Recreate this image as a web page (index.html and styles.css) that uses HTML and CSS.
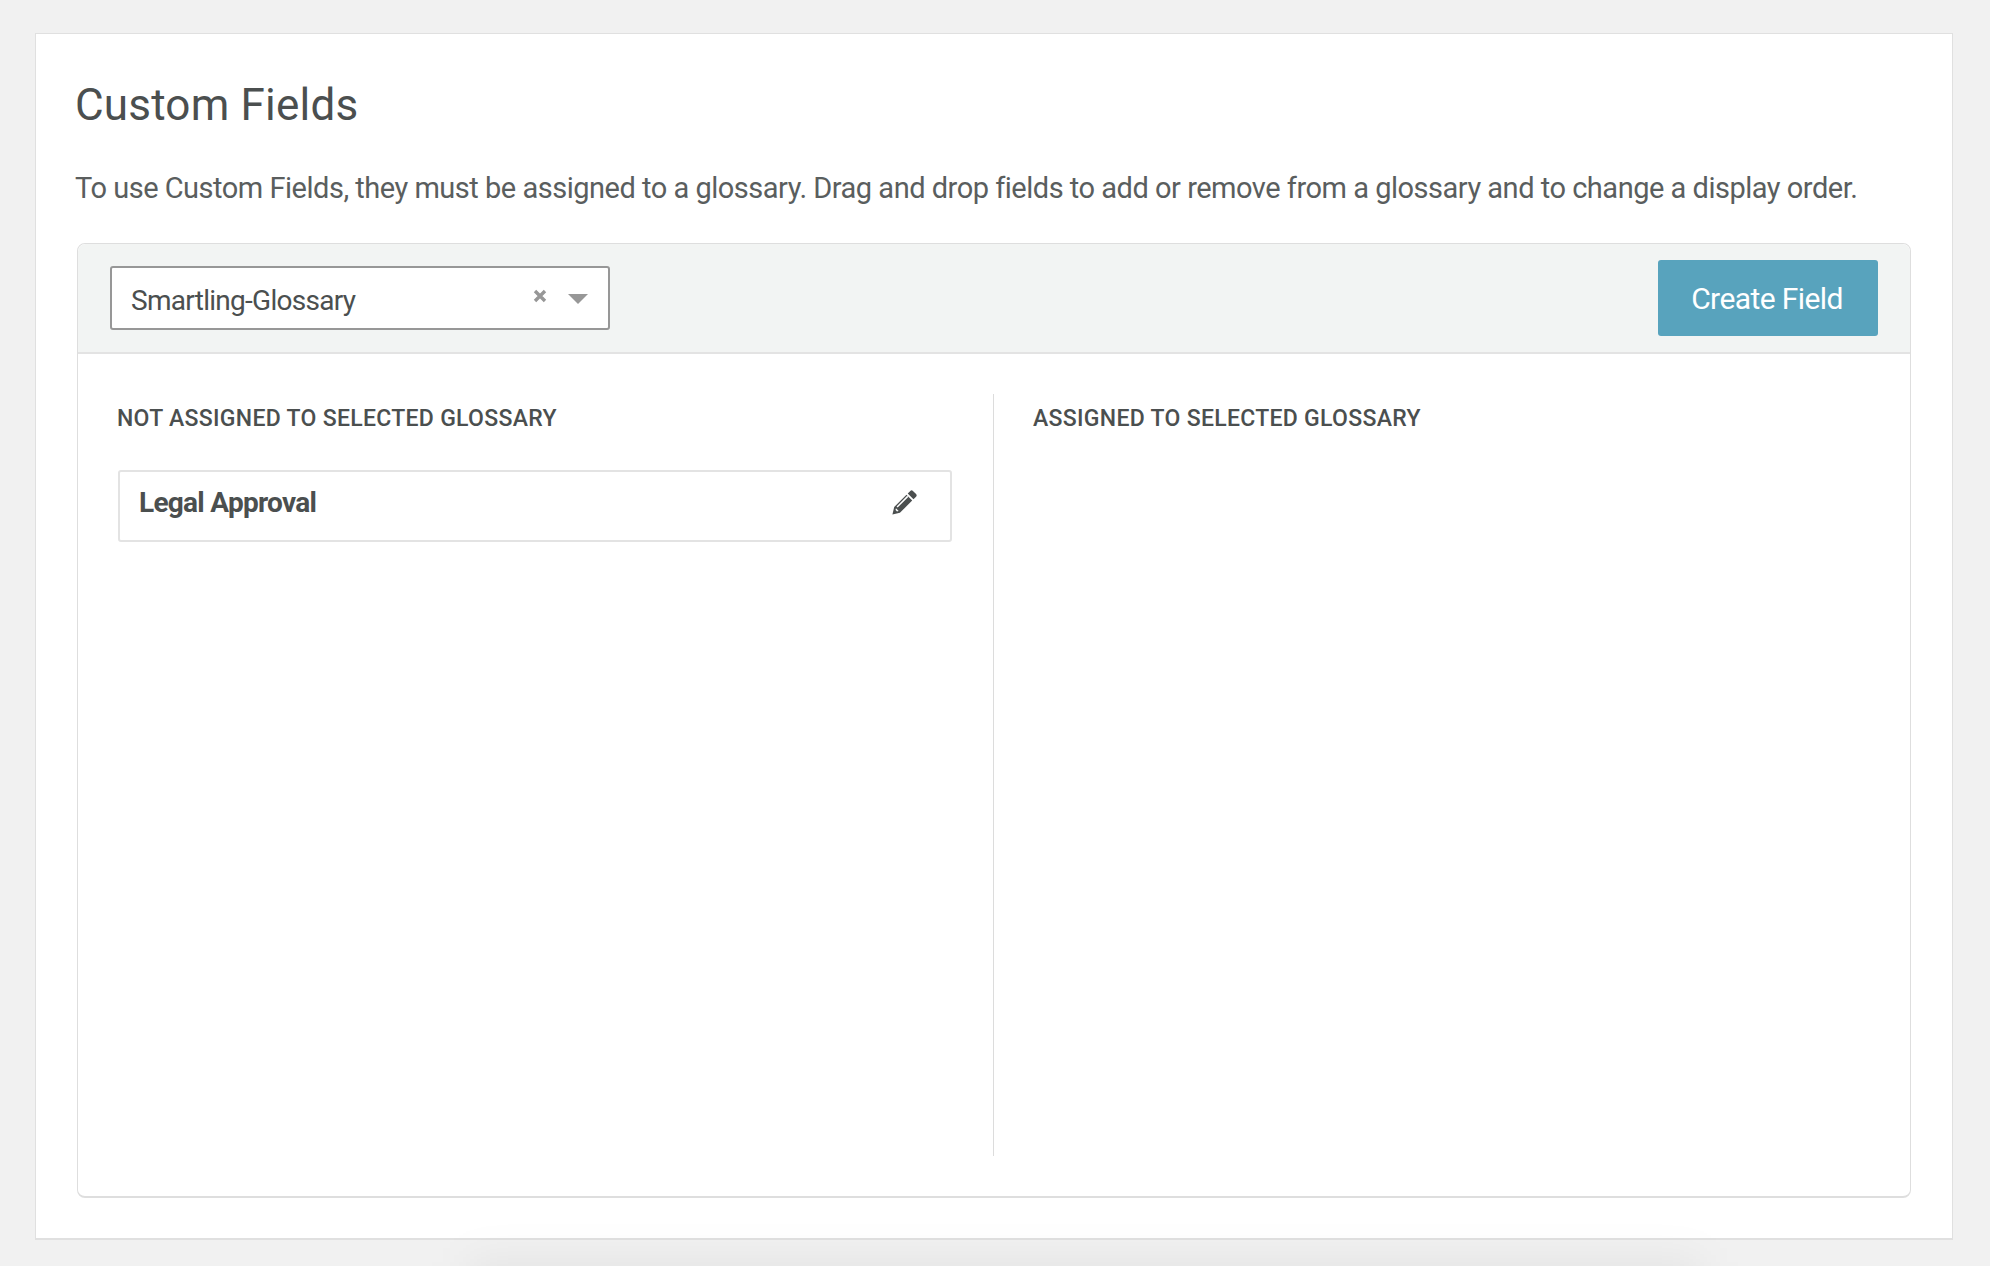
FILE: index.html
```html
<!DOCTYPE html>
<html lang="en">
<head>
<meta charset="utf-8">
<title>Custom Fields</title>
<link rel="stylesheet" href="styles.css">
</head>
<body>
<main class="card">
  <h1 class="title">Custom Fields</h1>
  <p class="intro">To use Custom Fields, they must be assigned to a glossary. Drag and drop fields to add or remove from a glossary and to change a display order.</p>
  <section class="panel">
    <header class="toolbar">
      <div class="select">
        <span class="select-value">Smartling-Glossary</span>
        <svg class="clear" viewBox="0 0 14 14" aria-hidden="true"><path d="M2 2l10 10M12 2L2 12"/></svg>
        <span class="caret"></span>
      </div>
      <button class="create" type="button">Create Field</button>
    </header>
    <div class="columns">
      <div class="col col-left">
        <h2 class="col-title">NOT ASSIGNED TO SELECTED GLOSSARY</h2>
        <div class="field">
          <span class="field-name">Legal Approval</span>
          <svg class="pencil" viewBox="0 0 24 24" aria-hidden="true"><path d="M17.6.9a1.8 1.8 0 0 1 2.5 0l3 3a1.8 1.8 0 0 1 0 2.5l-2.5 2.5-5.5-5.5zM13.9 4.6l5.5 5.5L7.6 21.9.4 23.6l1.7-7.2zM4.4 15.8l1 1L15.6 6.6l-1-1zM3.4 19.2l1.4 1.4 1.6-.4-2.6-2.6z" fill-rule="evenodd"/></svg>
        </div>
      </div>
      <div class="col col-right">
        <h2 class="col-title">ASSIGNED TO SELECTED GLOSSARY</h2>
      </div>
    </div>
  </section>
</main>
</body>
</html>
```
FILE: styles.css
```css
* { box-sizing: border-box; }
html, body { height: 100%; }
body {
  margin: 0;
  padding: 33px 37px 0 35px;
  background: #f1f1f1;
  color: #4b4f4f;
  font-family: Roboto, "Liberation Sans", sans-serif;
  overflow: hidden;
  position: relative;
}
body::after {
  content: "";
  position: absolute;
  left: 470px;
  right: 290px;
  top: 1262px;
  height: 60px;
  background: rgba(0, 0, 0, 0.06);
  filter: blur(22px);
  pointer-events: none;
}
.card {
  height: 1207px;
  background: #fff;
  border: 1px solid #e0e0e0;
  border-bottom-width: 2px;
  padding: 43px 41px 0;
}
.title {
  margin: 0 0 0 -2px;
  font-size: 44px;
  line-height: 56px;
  font-weight: 400;
  letter-spacing: 0.2px;
}
.intro {
  margin: 35px 0 0 -2px;
  font-size: 29px;
  line-height: 40px;
  letter-spacing: -0.49px;
  color: #5a5e5e;
  white-space: nowrap;
}
.panel {
  margin-top: 35px;
  height: 955px;
  border: 1px solid #dedede;
  border-bottom-width: 2px;
  border-radius: 8px;
  display: flex;
  flex-direction: column;
}
.toolbar {
  height: 110px;
  flex: none;
  display: flex;
  align-items: center;
  justify-content: space-between;
  padding: 0 32px;
  background: #f2f4f3;
  border-bottom: 2px solid #e3e3e3;
  border-radius: 8px 8px 0 0;
}
.select {
  width: 500px;
  height: 64px;
  display: flex;
  align-items: center;
  padding: 0 20px 0 19px;
  background: #fff;
  border: 2px solid #979797;
  border-radius: 3px;
}
.select-value { flex: 1; font-size: 28px; padding-top: 5px; letter-spacing: -0.72px; }
.clear {
  width: 14px;
  height: 14px;
  margin-right: 21px;
  margin-top: -5px;
  fill: none;
  stroke: #979797;
  stroke-width: 3.4;
}
.caret {
  width: 0;
  height: 0;
  margin-top: 2px;
  border-left: 10px solid transparent;
  border-right: 10px solid transparent;
  border-top: 10px solid #979797;
}
.create {
  width: 220px;
  height: 76px;
  border: 0;
  border-radius: 3px;
  background: #58a3bd;
  color: #fff;
  font: 400 30px Roboto, "Liberation Sans", sans-serif;
  letter-spacing: -0.6px;
  padding: 0 2px 0 0;
}
.columns {
  flex: 1;
  display: flex;
  padding: 40px 0;
}
.col { padding: 0 40px; }
.col-left { width: 916px; padding-right: 41px; border-right: 1px solid #dcdcdc; }
.col-right { flex: 1; }
.col-title {
  margin: 0 0 0 -1px;
  padding-top: 11px;
  font-size: 23px;
  line-height: 28px;
  font-weight: 500;
  letter-spacing: 0.3px;
}
.field {
  margin-top: 37px;
  height: 72px;
  display: flex;
  align-items: center;
  justify-content: space-between;
  padding: 0 33px 0 19px;
  border: 2px solid #e3e3e3;
  border-radius: 3px;
}
.field-name { font-size: 28px; font-weight: 700; letter-spacing: -0.72px; padding-bottom: 7px; }
.pencil { width: 25px; height: 25px; margin-top: -8px; fill: #4b4f4f; }
```
